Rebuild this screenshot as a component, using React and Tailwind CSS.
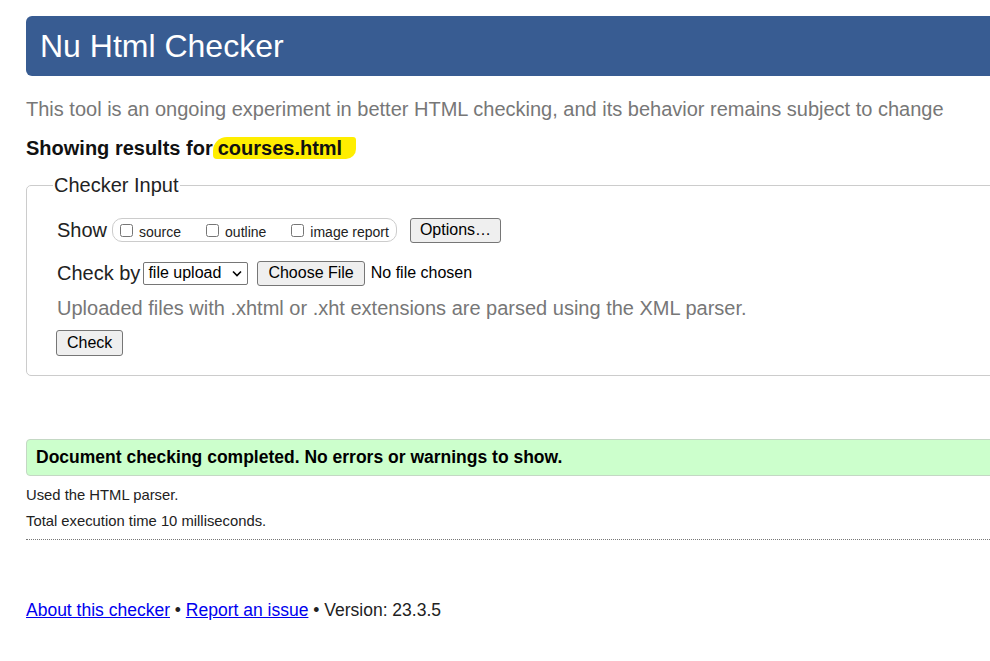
import React from 'react';

function Btn({ children, className = '' }) {
  return (
    <span className={`inline-flex items-center justify-center border border-[#767676] bg-[#efefef] rounded-[3px] text-[16px] text-black leading-none ${className}`}>
      {children}
    </span>
  );
}

function Box({ label }) {
  return (
    <label className="flex items-center gap-[6px]">
      <input type="checkbox" className="w-[13px] h-[13px] m-0" />
      <span className="text-[14px] leading-none mt-[3px] text-[#222]">{label}</span>
    </label>
  );
}

export default function App() {
  return (
    <div className="w-[990px] h-[661px] overflow-hidden bg-white">
      <div className="w-[1120px] pl-[26px] pt-[16px] font-['Liberation_Sans',Arial,sans-serif] text-[#222]">
        <div className="h-[60px] bg-[#385c92] rounded-[6px] flex items-center pl-[14px]">
          <h1 className="text-[32px] text-white leading-none">Nu Html Checker</h1>
        </div>

        <p className="mt-[21px] text-[20px] leading-[24px] text-[#777]">
          This tool is an ongoing experiment in better HTML checking, and its behavior remains subject to change
        </p>

        <p className="mt-[15px] text-[20px] leading-[24px] font-bold text-[#111]">
          Showing results for<span className="bg-[#ffee00] pl-[5px] pr-[14px] rounded-tl-[14px] rounded-bl-[4px] rounded-tr-[3px] rounded-br-[10px]">courses.html</span>
        </p>

        <fieldset className="mt-[13px] border border-[#ccc] rounded-[5px] pl-[30px] pb-[19px]">
          <legend className="text-[20px] leading-[24px] px-[1px] -ml-[4px] text-[#222]">Checker Input</legend>

          <div className="mt-[20px] h-[26px] flex items-center">
            <span className="text-[20px] leading-none">Show</span>
            <div className="ml-[5px] h-[24px] border border-[#ccc] rounded-[10px] flex items-center pl-[7px] pr-[7px] gap-[25px]">
              <Box label="source" />
              <Box label="outline" />
              <Box label="image report" />
            </div>
            <Btn className="ml-[13px] h-[25px] px-[9px]">Options…</Btn>
          </div>

          <div className="mt-[17px] h-[26px] flex items-center">
            <span className="text-[20px] leading-none">Check by</span>
            <span className="ml-[3px] h-[23px] w-[105px] border border-[#767676] rounded-[2px] bg-white flex items-center pl-[4px] pr-[5px] text-[16px] text-black justify-between">
              <span>file upload</span>
              <svg width="10" height="7" viewBox="0 0 10 7" className="mt-[1px]">
                <path d="M1 1.5 L5 5.5 L9 1.5" fill="none" stroke="#000" strokeWidth="1.6" />
              </svg>
            </span>
            <Btn className="ml-[9px] h-[25px] px-[10px]">Choose File</Btn>
            <span className="ml-[6px] text-[16px] text-black">No file chosen</span>
          </div>

          <p className="mt-[10px] text-[20px] leading-[24px] text-[#777]">
            Uploaded files with .xhtml or .xht extensions are parsed using the XML parser.
          </p>

          <Btn className="mt-[10px] -ml-[1px] h-[26px] px-[10px]">Check</Btn>
        </fieldset>

        <div className="mt-[63px] h-[37px] bg-[#ccffcc] border border-[#c4d8c4] rounded-[4px] flex items-center pl-[9px]">
          <span className="text-[17.5px] font-bold text-black">Document checking completed. No errors or warnings to show.</span>
        </div>

        <p className="mt-[9px] text-[14.8px] leading-[20px] text-[#222]">Used the HTML parser.</p>
        <p className="mt-[6px] text-[14.8px] leading-[20px] text-[#222]">Total execution time 10 milliseconds.</p>
        <div className="mt-[8px] border-b border-dotted border-[#777]" />

        <p className="mt-[59px] text-[17.5px] leading-[22px] text-[#222]">
          <a href="#" className="text-[#0000ee] underline">About this checker</a>
          {' • '}
          <a href="#" className="text-[#0000ee] underline">Report an issue</a>
          {' • Version: 23.3.5'}
        </p>
      </div>
    </div>
  );
}
